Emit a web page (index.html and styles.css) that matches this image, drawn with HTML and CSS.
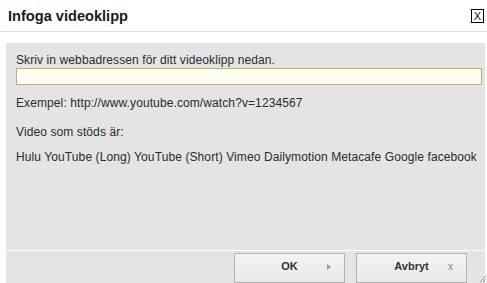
FILE: index.html
```html
<!DOCTYPE html>
<html lang="sv">
<head>
<meta charset="utf-8">
<title>Infoga videoklipp</title>
<link rel="stylesheet" href="styles.css">
</head>
<body>
<div class="dialog">
  <div class="titlebar">
    <span class="title">Infoga videoklipp</span>
    <span class="close">X</span>
  </div>
  <div class="content">
    <div class="label">Skriv in webbadressen för ditt videoklipp nedan.</div>
    <input class="url" type="text">
    <div class="example">Exempel: http://www.youtube.com/watch?v=1234567</div>
    <div class="supported">Video som stöds är:</div>
    <div class="list">Hulu YouTube (Long) YouTube (Short) Vimeo Dailymotion Metacafe Google facebook</div>
  </div>
  <div class="footer">
    <button class="btn" type="button">OK<span class="btn-icon arrow"></span></button>
    <button class="btn" type="button">Avbryt<span class="btn-icon cross">x</span></button>
    <svg class="grip" width="8" height="8" viewBox="0 0 8 8"><path d="M7 1L1 7M7 4L4 7" stroke="#999" stroke-width="1" fill="none"/></svg>
  </div>
</div>
</body>
</html>
```
FILE: styles.css
```css
html, body {
  margin: 0;
  padding: 0;
  background: #fff;
}
body {
  width: 487px;
  height: 283px;
  overflow: hidden;
  font-family: "Liberation Sans", Arial, sans-serif;
  color: #2b2b2b;
}
.dialog {
  position: relative;
  height: 283px;
  display: flex;
  flex-direction: column;
}
.titlebar {
  height: 31px;
  border-bottom: 1px solid #dedede;
  display: flex;
  align-items: center;
  justify-content: space-between;
  padding: 0 3px 0 8px;
}
.title {
  font-weight: bold;
  font-size: 14.6px;
  color: #1a1a1a;
  padding-top: 1px;
}
.close {
  width: 11px;
  height: 12px;
  border: 1px solid #000;
  font-size: 11px;
  line-height: 12px;
  text-align: center;
  color: #111;
  margin-top: 1px;
}
.content {
  margin: 11px 2px 0 6px;
  background: #e4e4e4;
  height: 200px;
  padding: 10px 3px 0 10px;
  font-size: 12px;
  line-height: 15px;
  letter-spacing: 0.1px;
}
.url {
  display: block;
  box-sizing: border-box;
  width: 100%;
  height: 17px;
  margin: 0;
  padding: 0;
  border: 1px solid #c6a870;
  background: #fffdf0;
  outline: none;
}
.example {
  margin-top: 11px;
}
.supported {
  margin-top: 14px;
}
.list {
  margin-top: 10px;
  white-space: nowrap;
}
.footer {
  margin: 1px 2px 0 6px;
  background: #e4e4e4;
  flex: 1;
  display: flex;
  justify-content: flex-end;
  align-items: flex-start;
  gap: 11px;
  padding: 2px 18px 0 0;
  position: relative;
}
.btn {
  position: relative;
  width: 111px;
  height: 30px;
  margin: 0;
  padding: 0 0 5px;
  border: 1px solid #b3b3b3;
  background: linear-gradient(#f3f3f3, #e9e9e9);
  font-family: "Liberation Sans", Arial, sans-serif;
  font-weight: bold;
  font-size: 11px;
  color: #333;
  text-align: center;
}
.btn-icon {
  position: absolute;
}
.arrow {
  right: 13px;
  top: 10px;
  width: 0;
  height: 0;
  border-left: 4px solid #999;
  border-top: 3px solid transparent;
  border-bottom: 3px solid transparent;
}
.cross {
  right: 13px;
  top: 7px;
  font-weight: normal;
  font-size: 10px;
  color: #888;
}
.grip {
  position: absolute;
  right: -2px;
  bottom: 0;
}
```
